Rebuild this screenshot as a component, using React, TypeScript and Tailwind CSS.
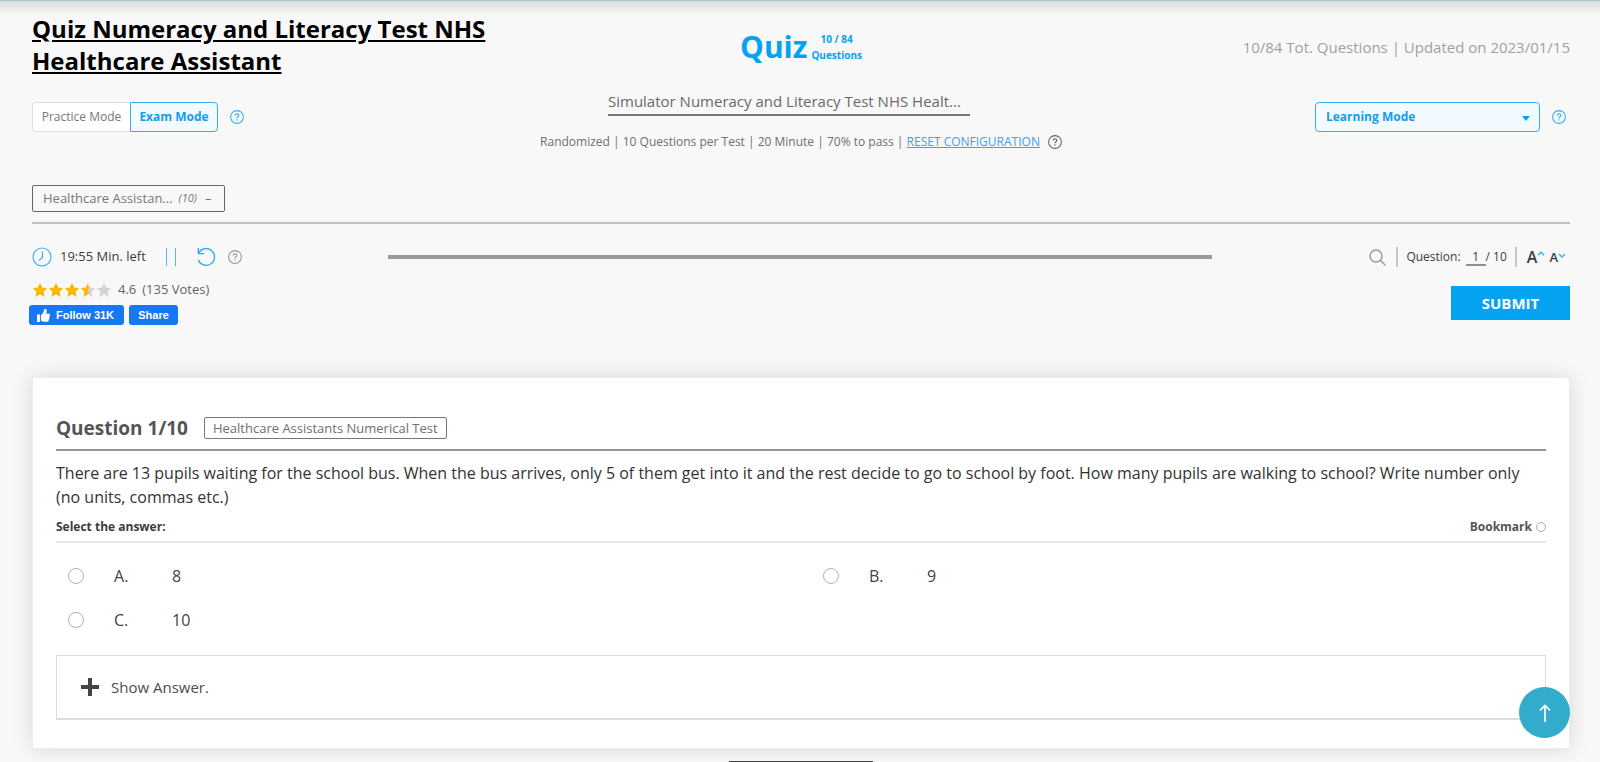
import { useState } from 'react';

const STAR = 'M12 1.5l3.2 6.9 7.5.9-5.5 5.2 1.4 7.5L12 18.3 5.4 22l1.4-7.5L1.3 9.3l7.5-.9z';

const answers = [
  { letter: 'A', text: '8' },
  { letter: 'B', text: '9' },
  { letter: 'C', text: '10' },
];

function HelpIcon({ className }: { className: string }) {
  return (
    <svg viewBox="0 0 16 16" fill="none" stroke="currentColor" className={className}>
      <circle cx="8" cy="8" r="7.3" strokeWidth="1.2" />
      <path d="M5.9 6.4c0-1.2.9-2 2.1-2s2.1.8 2.1 1.9c0 1.5-2.1 1.5-2.1 3" strokeWidth="1.3" />
      <path d="M8 10.5v1.4" strokeWidth="1.4" />
    </svg>
  );
}

function Star({ fill }: { fill: number }) {
  return (
    <svg viewBox="0 0 24 24" className="size-4">
      <path d={STAR} fill="#d3d4d8" />
      {fill === 1 && <path d={STAR} fill="#fdb900" />}
      {fill === 0.5 && (
        <path d="M12 1.5L8.8 8.4l-7.5.9 5.5 5.2L5.4 22l6.6-3.7 1.5-4-1.8-2.6 2.6-3.6-2.3-2z" fill="#fdb900" />
      )}
    </svg>
  );
}

function Header() {
  return (
    <header className="grid grid-cols-[1fr_auto_1fr] pt-3">
      <h1 className="text-2xl leading-8 font-bold text-black underline">
        Quiz Numeracy and Literacy Test NHS Healthcare Assistant
      </h1>
      <div className="flex items-center justify-center gap-1 pt-1 text-[#03a3f1]">
        <span className="text-[30px] leading-10 font-bold">Quiz</span>
        <span className="text-center text-[10px] leading-4 font-bold">
          10 / 84
          <br />
          Questions
        </span>
      </div>
      <p className="self-center pt-1 text-right text-[15px] text-[#a0a0a0]">
        10/84 Tot. Questions | Updated on 2023/01/15
      </p>

      <div className="flex items-start pt-[25px]">
        <button className="h-[30px] w-[98px] rounded-l border border-r-0 border-[#dcdfe6] bg-white text-xs text-[#777]">
          Practice Mode
        </button>
        <button className="h-[30px] w-[88px] rounded-r border border-[#36aef3] bg-[#f2faff] text-xs font-bold text-[#159cf0]">
          Exam Mode
        </button>
        <button aria-label="About the modes" className="mt-2 ml-3 text-[#36aef3]">
          <HelpIcon className="size-3.5" />
        </button>
      </div>
      <div className="flex flex-col items-center pt-3">
        <div className="pr-6">
          <select
            aria-label="Simulator"
            className="w-[362px] appearance-none border-b-2 border-[#777] pb-0.5 text-[15px] leading-[22px] text-[#6a6a6a]"
          >
            <option>Simulator Numeracy and Literacy Test NHS Healt...</option>
          </select>
        </div>
        <div className="mt-4 flex items-center text-xs leading-5 whitespace-nowrap text-[#6f6f6f]">
          <p>
            Randomized | 10 Questions per Test | 20 Minute | 70% to pass |{' '}
            <a href="#reset" className="text-[#3fa0ee] underline">
              RESET CONFIGURATION
            </a>
          </p>
          <button aria-label="About the configuration" className="ml-2 text-[#666]">
            <HelpIcon className="size-3.5" />
          </button>
        </div>
      </div>
      <div className="flex items-start justify-end pt-[25px] pr-1">
        <div className="relative">
          <select
            aria-label="Learning mode"
            className="h-[30px] w-[225px] appearance-none rounded border border-[#36aef3] bg-[#f2faff] pl-2.5 text-xs font-bold text-[#159cf0]"
          >
            <option>Learning Mode</option>
          </select>
          <svg viewBox="0 0 8 5" className="pointer-events-none absolute top-3.5 right-2.5 h-[5px] w-2">
            <path d="M0 0h8L4 5z" fill="#03a3f1" />
          </svg>
        </div>
        <button aria-label="About learning mode" className="mt-2 ml-3 text-[#36aef3]">
          <HelpIcon className="size-3.5" />
        </button>
      </div>
    </header>
  );
}

function Toolbar() {
  return (
    <div className="flex h-5 items-center text-[13px] text-[#3c3c3c]">
      <svg viewBox="0 0 20 20" fill="none" stroke="#36aef3" className="size-5">
        <circle cx="10" cy="10" r="9" strokeWidth="1.1" />
        <path d="M10.4 4.500v6L6.800 13.600" strokeWidth="1.1" />
      </svg>
      <span className="ml-2 w-[106px]">19:55 Min. left</span>
      <button aria-label="Pause" className="h-[18px] w-2.5 border-x border-[#4fb8f5]" />
      <button aria-label="Restart" className="ml-5">
        <svg viewBox="0 0 20 20" fill="none" stroke="#36aef3" strokeWidth="1.4" className="size-5">
          <path d="M2.300 1v5.600h6" />
          <path d="M2.500 6.400A8.400 8.400 0 1 1 2.300 13" />
        </svg>
      </button>
      <button aria-label="About the timer" className="ml-3 text-[#999]">
        <HelpIcon className="size-3.5" />
      </button>
      <div className="ml-[146px] h-1 flex-1 bg-[#9b9b9b]" />
      <button aria-label="Search" className="ml-[157px]">
        <svg viewBox="0 0 17 17" fill="none" stroke="#999" strokeWidth="1.4" className="size-[17px]">
          <circle cx="7" cy="7" r="6" />
          <path d="M11.3 11.3l5 5" />
        </svg>
      </button>
      <div className="ml-2.5 flex h-5 items-center border-x-2 border-[#c6c6c6] px-2 text-xs">
        <label htmlFor="question-number">Question:</label>
        <input
          id="question-number"
          defaultValue="1"
          className="ml-[5px] h-[18px] w-5 border-b-2 border-[#8f8f8f] text-center outline-none"
        />
        <span>/ 10</span>
      </div>
      <button aria-label="Larger text" className="ml-2.5 flex">
        <span className="text-base leading-5 font-semibold">A</span>
        <svg viewBox="0 0 8 5" fill="none" stroke="#36aef3" strokeWidth="1.3" className="mt-1 h-[5px] w-2">
          <path d="M1 4.200L4 1.200l3 3" />
        </svg>
      </button>
      <button aria-label="Smaller text" className="mr-1 ml-1 flex">
        <span className="text-[13px] leading-6 font-semibold">A</span>
        <svg viewBox="0 0 8 5" fill="none" stroke="#36aef3" strokeWidth="1.3" className="mt-2 h-[5px] w-2">
          <path d="M1 1l3 3 3-3" />
        </svg>
      </button>
    </div>
  );
}

function QuestionCard() {
  const [selected, setSelected] = useState('');

  return (
    <section className="mt-[52px] border border-[#ebebf0] bg-white px-[23px] pt-[38px] pb-7 shadow-[0_0_20px_rgba(0,0,0,0.13)]">
      <div className="flex items-center gap-4 border-b-2 border-[#979797] pb-[9px]">
        <h2 className="text-[19px] leading-6 font-bold text-[#555]">Question 1/10</h2>
        <span className="rounded-xs border border-[#777] px-2 text-[13px] leading-5 text-[#6f6f6f]">
          Healthcare Assistants Numerical Test
        </span>
      </div>
      <p className="pt-2.5 text-base leading-6 text-[#333]">
        There are 13 pupils waiting for the school bus. When the bus arrives, only 5 of them get into it and the
        rest decide to go to school by foot. How many pupils are walking to school? Write number only (no units,
        commas etc.)
      </p>
      <div className="flex items-center justify-between border-b-2 border-[#e8e8e8] pt-2 pb-1 text-xs leading-5 font-bold">
        <p className="text-[#3c3c3c]">Select the answer:</p>
        <label className="flex items-center gap-1 text-[#555]">
          Bookmark
          <input type="checkbox" className="size-2.5 appearance-none rounded-full border border-[#aaa] checked:bg-[#36aef3]" />
        </label>
      </div>

      <div className="grid grid-cols-2 gap-x-8 gap-y-5 pt-[21px] pl-3">
        {answers.map((answer) => (
          <label key={answer.letter} className="flex h-6 items-center text-base text-[#444]">
            <input
              type="radio"
              name="answer"
              checked={selected === answer.letter}
              onChange={() => setSelected(answer.letter)}
              className="size-4 appearance-none rounded-full border border-[#b0b0b0] checked:bg-[#36aef3]"
            />
            <span className="ml-[30px] w-[58px]">{answer.letter}.</span>
            <span>{answer.text}</span>
          </label>
        ))}
      </div>

      <button className="mt-[23px] flex h-[65px] w-full items-center gap-3 border border-b-2 border-[#dcdcdc] pl-6 text-[15px] text-[#4c4c4c]">
        <svg viewBox="0 0 18 18" className="size-[18px]">
          <path d="M9 0v18M0 9h18" stroke="#444" strokeWidth="4" />
        </svg>
        Show Answer.
      </button>
    </section>
  );
}

export default function App() {
  return (
    <main className="min-h-screen border-t border-[#a9c9d1] bg-[#f8f8f8] bg-[linear-gradient(#dcdcdc,#f8f8f8_14px)] pr-[30px] pl-8 font-['Open_Sans','Noto_Sans',sans-serif]">
      <Header />

      {/* Topic filter */}
      <div className="mt-[33px] border-b-2 border-[#c0c0c0] pb-2.5">
        <button className="flex h-[27px] w-[193px] items-center rounded-xs border border-[#666] pl-2.5 text-[13px] text-[#777]">
          Healthcare Assistan...
          <em className="ml-1.5 text-[11px]">(10)</em>
          <span className="ml-2">–</span>
        </button>
      </div>

      <div className="pt-[23px]">
        <Toolbar />
      </div>

      {/* Rating, social and submit */}
      <div className="flex items-start justify-between pt-[13px]">
        <div>
          <div className="flex h-5 items-center text-[13px] text-[#666]">
            <Star fill={1} />
            <Star fill={1} />
            <Star fill={1} />
            <Star fill={0.5} />
            <Star fill={0} />
            <span className="ml-1.5">4.6</span>
            <span className="ml-1.5">(135 Votes)</span>
          </div>
          <div className="-ml-[3px] flex gap-[5px] pt-[5px] font-['Liberation_Sans',Arial,sans-serif] text-[11px] font-bold text-white">
            <button className="flex h-5 w-[95px] items-center gap-1.5 rounded-[3px] bg-[#1877f2] pl-2">
              <svg viewBox="0 0 16 16" fill="currentColor" className="size-[13px]">
                <path d="M0 6.8h3.6V16H0zM4.8 14.6V7.4c2-.9 3.3-2.7 3.6-5.1C8.6.7 9.100 0 10 0c1.300 0 2 1 2 2.600 0 1.300-.3 2.200-.8 3.200h3.300c.9 0 1.500.6 1.500 1.500 0 .7-.4 1.200-.9 1.400.4.3.6.7.6 1.200 0 .7-.4 1.200-1 1.400.2.300.4.6.4 1 0 .6-.4 1.100-.9 1.300.1.200.2.4.2.7 0 .8-.7 1.300-1.600 1.300H8.500c-1.500 0-2.500-.4-3.700-1z" />
              </svg>
              Follow 31K
            </button>
            <button className="h-5 w-[49px] rounded-[3px] bg-[#1877f2]">Share</button>
          </div>
        </div>
        <button className="mt-1.5 h-[34px] w-[119px] bg-[#03a3f1] text-[15px] font-bold text-white">SUBMIT</button>
      </div>

      <QuestionCard />

      <div className="mx-auto mt-3 w-36 border-t border-[#444]" />

      <button
        aria-label="Back to top"
        className="fixed right-[30px] bottom-6 flex size-[51px] items-center justify-center rounded-full bg-[#33accb] text-white"
      >
        <svg viewBox="0 0 12 18" fill="none" stroke="currentColor" strokeWidth="1.7" className="h-[18px] w-3">
          <path d="M6 18V1.500M1 6.500l5-5 5 5" />
        </svg>
      </button>
    </main>
  );
}
